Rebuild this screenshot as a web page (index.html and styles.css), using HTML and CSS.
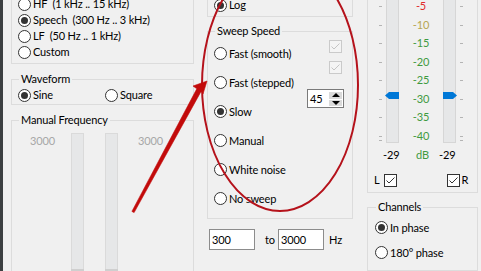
FILE: index.html
```html
<!DOCTYPE html>
<html lang="en">

<head>
    <meta charset="UTF-8">
    <meta name="viewport" content="width=device-width, initial-scale=1.0">
    <title>Sweep settings</title>
    <link rel="stylesheet" href="styles.css">
</head>

<body>
    <div class="screen">
        <div class="edge"></div>

        <!-- left column: band, waveform, manual frequency -->
        <div class="col col-left">
            <fieldset class="group cut band">
                <div class="opt"><span class="radio"></span>HF  (1 kHz .. 15 kHz)</div>
                <div class="opt"><span class="radio on"></span>Speech  (300 Hz .. 3 kHz)</div>
                <div class="opt"><span class="radio"></span>LF  (50 Hz .. 1 kHz)</div>
                <div class="opt"><span class="radio"></span>Custom</div>
            </fieldset>

            <fieldset class="group waveform">
                <legend>Waveform</legend>
                <div class="pair">
                    <div class="opt"><span class="radio on"></span>Sine</div>
                    <div class="opt"><span class="radio"></span>Square</div>
                </div>
            </fieldset>

            <fieldset class="group manual">
                <legend>Manual Frequency</legend>
                <div class="manual-body">
                    <span class="freq-label">3000</span>
                    <div class="vtrack"><span class="vthumb"></span></div>
                    <div class="vtrack"><span class="vthumb"></span></div>
                    <span class="freq-label">3000</span>
                </div>
            </fieldset>
        </div>

        <!-- middle column: sweep -->
        <div class="col col-mid">
            <fieldset class="group cut sweep-type">
                <div class="opt"><span class="radio on"></span>Log</div>
            </fieldset>

            <fieldset class="group speed">
                <legend>Sweep Speed</legend>
                <div class="speed-body">
                    <div class="speed-list">
                        <div class="opt tall"><span class="radio"></span>Fast (smooth)</div>
                        <div class="opt tall"><span class="radio"></span>Fast (stepped)</div>
                        <div class="opt tall"><span class="radio on"></span>Slow</div>
                        <div class="opt tall"><span class="radio"></span>Manual</div>
                        <div class="opt tall"><span class="radio"></span>White noise</div>
                        <div class="opt tall"><span class="radio"></span>No sweep</div>
                    </div>
                    <div class="speed-side">
                        <span class="check off">
                            <svg width="11" height="11" viewBox="0 0 11 11"><path d="M1.5 5.5 L4 8 L9.5 2.5" fill="none" stroke="#c4c4c4" stroke-width="1"/></svg>
                        </span>
                        <span class="check off second">
                            <svg width="11" height="11" viewBox="0 0 11 11"><path d="M1.5 5.5 L4 8 L9.5 2.5" fill="none" stroke="#c4c4c4" stroke-width="1"/></svg>
                        </span>
                        <div class="spin">
                            <span class="spin-value">45</span>
                            <span class="spin-btns">
                                <span class="spin-btn up"></span>
                                <span class="spin-btn down"></span>
                            </span>
                        </div>
                    </div>
                </div>
            </fieldset>

            <div class="range">
                <span class="field">300</span>
                <span class="to">to</span>
                <span class="field">3000</span>
                <span class="unit">Hz</span>
            </div>
        </div>

        <!-- right column: level meter, channels -->
        <div class="col col-right">
            <fieldset class="group cut level">
                <div class="meter">
                    <div class="ticks">
                        <i></i><i></i><i></i><i></i><i></i><i></i><i></i><i></i><i class="extra"></i>
                    </div>
                    <div class="mtrack"><span class="mthumb left"></span></div>
                    <div class="scale">
                        <span class="db-red">-5</span>
                        <span class="db-yellow">-10</span>
                        <span>-15</span>
                        <span>-20</span>
                        <span>-25</span>
                        <span>-30</span>
                        <span>-35</span>
                        <span>-40</span>
                    </div>
                    <div class="mtrack"><span class="mthumb right"></span></div>
                    <div class="ticks">
                        <i></i><i></i><i></i><i></i><i></i><i></i><i></i><i></i><i class="extra"></i>
                    </div>
                </div>
                <div class="readout">
                    <span class="read-l">-29</span>
                    <span class="read-unit">dB</span>
                    <span>-29</span>
                </div>
                <div class="lr">
                    <span>L</span>
                    <span class="check">
                        <svg width="11" height="11" viewBox="0 0 11 11"><path d="M1.5 5.5 L4 8 L9.5 2.5" fill="none" stroke="#333" stroke-width="1"/></svg>
                    </span>
                    <span class="check right-check">
                        <svg width="11" height="11" viewBox="0 0 11 11"><path d="M1.5 5.5 L4 8 L9.5 2.5" fill="none" stroke="#333" stroke-width="1"/></svg>
                    </span>
                    <span class="r-label">R</span>
                </div>
            </fieldset>

            <fieldset class="group channels">
                <legend>Channels</legend>
                <div class="opt row25"><span class="radio on"></span>In phase</div>
                <div class="opt row25"><span class="radio"></span>180° phase</div>
            </fieldset>
        </div>
    </div>

    <!-- red markup drawn over the dialog -->
    <svg class="markup" width="481" height="271" viewBox="0 0 481 271">
        <ellipse cx="280" cy="85" rx="78" ry="126" fill="none" stroke="#b5121b" stroke-width="2"/>
        <polygon points="131.9,211.4 196.8,88.8 193,86 207,81 203,94 201.2,91.2 134.1,212.6" fill="#c20a0a" stroke="#c20a0a" stroke-width="0.6" stroke-linejoin="round"/>
    </svg>
</body>

</html>
```

FILE: styles.css
```css
* {
    box-sizing: border-box;
}

body {
    margin: 0;
    background: #f0f0f0;
    color: #000;
    font: 11px/16px "Segoe UI", Lato, "Noto Sans", sans-serif;
    letter-spacing: -0.15px;
    overflow: hidden;
}

.screen {
    display: flex;
    height: 271px;
    overflow: hidden;
}

.edge {
    flex: none;
    width: 3px;
    background: #3c3f41;
}

.col {
    flex: none;
    display: flex;
    flex-direction: column;
}

.col-left {
    width: 183px;
    margin-left: 8px;
}

.col-mid {
    width: 146px;
    margin-left: 13px;
}

.col-right {
    width: 111px;
    margin-left: 14px;
}

/* group boxes */
.group {
    margin: 0;
    padding: 0 0 0 6px;
    min-width: 0;
    border: 1px solid #dcdcdc;
}

.group legend {
    margin-left: 1px;
    padding: 0 2px;
    line-height: 16px;
}

.group.cut {
    border-top: none;
}

/* radio rows */
.opt {
    display: flex;
    align-items: center;
    height: 16px;
    white-space: pre;
}

.opt.tall {
    height: 29px;
}

.opt.row25 {
    height: 25px;
}

.radio {
    flex: none;
    width: 13px;
    height: 13px;
    margin-right: 2px;
    border: 1px solid #333;
    border-radius: 50%;
    background: #fff;
}

.radio.on::after {
    content: "";
    display: block;
    width: 7px;
    height: 7px;
    margin: 2px;
    border-radius: 50%;
    background: #333;
}

.check {
    display: flex;
    align-items: center;
    justify-content: center;
    width: 13px;
    height: 13px;
    border: 1px solid #333;
    background: #fff;
}

.check.off {
    border-color: #cacaca;
    background: #f4f4f4;
}

/* left column */
.band {
    margin-top: -4px;
    padding-bottom: 3px;
}

.waveform {
    margin-top: 7px;
    padding-bottom: 1px;
}

.pair {
    display: flex;
}

.pair .opt:first-child {
    width: 87px;
}

.manual {
    margin-top: 7px;
}

.manual-body {
    display: flex;
    align-items: flex-start;
    padding-top: 5px;
    padding-left: 12px;
    height: 160px;
}

.freq-label {
    width: 22px;
    color: #a7a7a7;
}

.vtrack {
    width: 13px;
    height: 150px;
    margin-left: 19px;
    border: 1px solid #dadada;
    border-bottom: none;
    background: #e6e7e8;
}

.vtrack + .vtrack {
    margin-left: 21px;
}

.vtrack + .freq-label {
    margin-left: 20px;
}

.vthumb {
    display: block;
    height: 4px;
    margin: 135px -1px 0;
    background: #cfcfcf;
}

/* middle column */
.sweep-type {
    margin-top: -3px;
    padding-bottom: 3px;
}

.speed {
    margin-top: 6px;
    padding-bottom: 5px;
}

.speed-body {
    display: flex;
}

.speed-list {
    flex: 1;
}

.speed-side {
    width: 37px;
    margin-right: 8px;
    padding-top: 1px;
}

.speed-side .check {
    margin-left: 22px;
}

.speed-side .second {
    margin-top: 8px;
}

.spin {
    display: flex;
    height: 19px;
    margin-top: 15px;
    border: 1px solid #7a7a7a;
    background: #fff;
}

.spin-value {
    padding-left: 2px;
    line-height: 17px;
}

.spin-btns {
    display: flex;
    flex-direction: column;
    gap: 1px;
    width: 13px;
    margin: 2px 1px 1px auto;
}

.spin-btn {
    flex: 1;
    display: flex;
    align-items: center;
    justify-content: center;
    background: #dadada;
}

.spin-btn.up::after,
.spin-btn.down::after {
    content: "";
    border-left: 4px solid transparent;
    border-right: 4px solid transparent;
}

.spin-btn.up::after {
    border-bottom: 4px solid #000;
}

.spin-btn.down::after {
    border-top: 4px solid #000;
}

.range {
    display: flex;
    align-items: center;
    margin-top: 10px;
    padding-left: 2px;
}

.field {
    width: 46px;
    height: 21px;
    padding-left: 2px;
    border: 1px solid #8c8c8c;
    background: #fff;
    line-height: 19px;
}

.to {
    width: 23px;
    padding-left: 10px;
}

.unit {
    margin-left: 5px;
}

/* right column */
.level {
    padding: 0 0 4px 0;
}

.meter {
    display: flex;
    height: 143px;
    padding-left: 11px;
}

.ticks {
    display: flex;
    flex-direction: column;
    width: 3px;
    margin-top: -3px;
}

.ticks i {
    flex: none;
    height: 18.57px;
}

.ticks i::after {
    content: "";
    display: block;
    height: 1px;
    margin-top: 9px;
    background: #b4b4b4;
}

.ticks i.extra {
    height: 4px;
    margin-top: -9px;
}

.ticks i.extra::after {
    margin-top: 3px;
}

.ticks:first-child {
    margin-right: 4px;
}

.ticks:last-child {
    margin-left: 4px;
}

.mtrack {
    width: 13px;
    border: 1px solid #d6d6d6;
    border-top: none;
    background: #e6e7e8;
}

.mthumb {
    display: block;
    width: 14px;
    height: 7px;
    margin-top: 92px;
    background: #0078d7;
}

.mthumb.left {
    margin-left: -2px;
    clip-path: polygon(4px 0, 100% 0, 100% 100%, 4px 100%, 0 50%);
}

.mthumb.right {
    margin-left: -1px;
    clip-path: polygon(0 0, calc(100% - 4px) 0, 100% 50%, calc(100% - 4px) 100%, 0 100%);
}

.scale {
    display: flex;
    flex-direction: column;
    width: 44px;
    margin-top: -3px;
    color: #3f9a3f;
    text-align: center;
}

.scale span {
    height: 18.57px;
    line-height: 18.57px;
}

.scale .db-red {
    color: #e02a2a;
}

.scale .db-yellow {
    color: #b6a650;
}

.readout {
    display: flex;
    height: 16px;
    margin-top: 4px;
    padding-left: 15px;
}

.read-l {
    width: 33px;
}

.read-unit {
    width: 23px;
    color: #3f9a3f;
}

.lr {
    display: flex;
    align-items: center;
    height: 16px;
    margin-top: 9px;
    padding-left: 6px;
}

.lr .check {
    margin-left: 4px;
}

.lr .right-check {
    margin-left: 50px;
}

.r-label {
    margin-left: 2px;
}

.channels {
    flex: 1;
    margin-top: 6px;
    padding-left: 7px;
}

/* annotation layer */
.markup {
    position: absolute;
    top: 0;
    left: 0;
    pointer-events: none;
}
```
